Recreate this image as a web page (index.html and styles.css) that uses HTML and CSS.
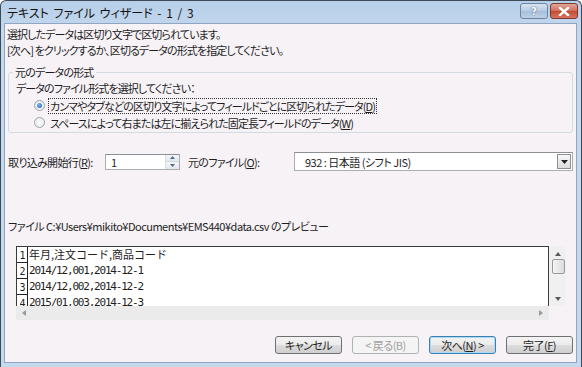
FILE: index.html
```html
<!DOCTYPE html>
<html lang="ja">

<head>
    <meta charset="UTF-8">
    <meta name="viewport" content="width=device-width, initial-scale=1.0">
    <title>テキスト ファイル ウィザード</title>
    <link rel="stylesheet" href="styles.css">
</head>

<body>
    <div class="window">
        <div class="titleBar">
            <span class="titleText">テキスト ファイル ウィザード - 1 / 3</span>
            <div class="captionBtns">
                <button class="capBtn helpBtn">?</button>
                <button class="capBtn closeBtn">
                    <svg width="12" height="9" viewBox="0 0 12 9">
                        <path d="M2 1 L10 8 M10 1 L2 8" stroke="#fff" stroke-width="2.4" stroke-linecap="square" fill="none" />
                    </svg>
                </button>
            </div>
        </div>

        <div class="content">
            <p class="intro">選択したデータは区切り文字で区切られています。</p>
            <p class="intro">[次へ] をクリックするか、区切るデータの形式を指定してください。</p>

            <fieldset class="groupBox">
                <legend class="groupLabel">元のデータの形式</legend>
                <p class="hint">データのファイル形式を選択してください：</p>
                <label class="radioRow">
                    <span class="radioDot checked"></span>
                    <span class="radioText focused">カンマやタブなどの区切り文字によってフィールドごとに区切られたデータ(<u>D</u>)</span>
                </label>
                <label class="radioRow">
                    <span class="radioDot"></span>
                    <span class="radioText">スペースによって右または左に揃えられた固定長フィールドのデータ(<u>W</u>)</span>
                </label>
            </fieldset>

            <div class="optionRow">
                <span class="optLabel startLabel">取り込み開始行(<u>R</u>):</span>
                <div class="spinBox">
                    <span class="spinValue">1</span>
                    <div class="spinArrows">
                        <span class="spinBtn"><svg width="5" height="3" viewBox="0 0 5 3"><path d="M0 3 L2.5 0 L5 3 Z" fill="#4d6a8c" /></svg></span>
                        <span class="spinBtn"><svg width="5" height="3" viewBox="0 0 5 3"><path d="M0 0 L2.5 3 L5 0 Z" fill="#4d6a8c" /></svg></span>
                    </div>
                </div>
                <span class="optLabel fileLabel">元のファイル(<u>O</u>):</span>
                <div class="comboBox">
                    <span class="comboValue">932 : 日本語 (シフト JIS)</span>
                    <span class="comboBtn"><svg width="7" height="4" viewBox="0 0 7 4"><path d="M0 0 L7 0 L3.5 4 Z" fill="#222" /></svg></span>
                </div>
            </div>

            <p class="previewLabel">ファイル C:¥Users¥mikito¥Documents¥EMS440¥data.csv のプレビュー</p>

            <div class="previewArea">
                <div class="previewMain">
                    <div class="grid">
                        <div class="gridRow"><span class="rowNum">1</span><span class="rowData cjk">年月,注文コード,商品コード</span></div>
                        <div class="gridRow"><span class="rowNum">2</span><span class="rowData">2014/12,001,2014-12-1</span></div>
                        <div class="gridRow"><span class="rowNum">3</span><span class="rowData">2014/12,002,2014-12-2</span></div>
                        <div class="gridRow"><span class="rowNum">4</span><span class="rowData">2015/01,003,2014-12-3</span></div>
                    </div>
                    <div class="hScroll">
                        <svg width="4" height="6" viewBox="0 0 4 6"><path d="M4 0 L0 3 L4 6 Z" fill="#9a9a9a" /></svg>
                        <svg width="4" height="6" viewBox="0 0 4 6"><path d="M0 0 L4 3 L0 6 Z" fill="#9a9a9a" /></svg>
                    </div>
                </div>
                <div class="vScroll">
                    <svg width="6" height="4" viewBox="0 0 6 4"><path d="M0 4 L3 0 L6 4 Z" fill="#5a5a5a" /></svg>
                    <span class="vThumb"></span>
                    <svg width="6" height="4" viewBox="0 0 6 4"><path d="M0 0 L3 4 L6 0 Z" fill="#5a5a5a" /></svg>
                </div>
            </div>

            <div class="buttonRow">
                <button class="dlgBtn">キャンセル</button>
                <button class="dlgBtn disabled">&lt; 戻る(B)</button>
                <button class="dlgBtn defaultBtn">次へ(<u>N</u>) &gt;</button>
                <button class="dlgBtn">完了(<u>F</u>)</button>
            </div>
        </div>
    </div>
</body>

</html>
```

FILE: styles.css
```css
* {
    margin: 0;
    padding: 0;
    box-sizing: border-box;
}

body {
    width: 582px;
    height: 367px;
    background-color: #ffffff;
    font-family: "Noto Sans CJK JP", "Noto Sans", sans-serif;
    font-size: 11px;
    color: #1e1e1e;
    font-feature-settings: "palt";
    overflow: hidden;
}

.window {
    width: 582px;
    height: 367px;
    display: flex;
    flex-direction: column;
    background: linear-gradient(#b7cfe9, #c4d8ee 30px, #c4d8ee);
    border: 1px solid #3e4a58;
    border-bottom: none;
    border-radius: 6px 6px 0 0;
}

.titleBar {
    height: 22px;
    display: flex;
    align-items: center;
    justify-content: space-between;
    padding: 0 3px 0 6px;
}

.titleText {
    font-size: 12px;
    color: #111;
    word-spacing: 2px;
}

.captionBtns {
    display: flex;
    gap: 2px;
    margin-top: -2px;
}

.capBtn {
    width: 28px;
    height: 16px;
    border: 1px solid #6d84a0;
    border-radius: 3px;
    display: flex;
    align-items: center;
    justify-content: center;
    font-family: "DejaVu Sans", sans-serif;
    font-size: 11px;
    font-weight: bold;
    line-height: 1;
}

.helpBtn {
    background: linear-gradient(#d7e4f2, #b5cbe3 50%, #a6bfdb 51%, #bcd1e8);
    color: #ffffff;
    text-shadow: 0 0 1px #4a5a70, 0 0 1px #4a5a70;
}

.closeBtn {
    border-color: #7a3a30;
    background: linear-gradient(#e4a69a, #d26e5c 50%, #c24a34 51%, #d9745f);
}

.content {
    flex: 1;
    margin: 0 4px 4px 3px;
    background-color: #f6f2f6;
    border: 1px solid #8ea6c2;
    padding-top: 2px;
    display: flex;
    flex-direction: column;
}

.intro {
    line-height: 16px;
    padding-left: 2px;
    letter-spacing: -0.9px;
}

.groupBox {
    margin: 6px 3px 0 3px;
    border: 1px solid #d3dbe2;
    border-radius: 3px;
    padding: 0 0 1px 0;
}

.groupLabel {
    margin-left: 4px;
    padding: 0 2px;
    line-height: 16px;
    letter-spacing: -0.8px;
}

.hint {
    line-height: 17px;
    padding-left: 7px;
    letter-spacing: -0.9px;
}

.radioRow {
    display: flex;
    align-items: center;
    height: 17px;
    padding-left: 25px;
    letter-spacing: -0.9px;
}

.radioDot {
    width: 11px;
    height: 11px;
    border-radius: 50%;
    border: 1px solid #9aa3ab;
    background: radial-gradient(#ffffff, #e2e5e8);
    margin-right: 3px;
    position: relative;
}

.radioDot.checked::after {
    content: "";
    position: absolute;
    left: 2px;
    top: 2px;
    width: 5px;
    height: 5px;
    border-radius: 50%;
    background: radial-gradient(circle at 40% 35%, #7ab8f0, #1c5fb0);
}

.radioText {
    padding: 0 1px;
    line-height: 14px;
    border: 1px dotted transparent;
}

.radioText.focused {
    border-color: #333;
}

.optionRow {
    display: flex;
    align-items: center;
    margin-top: 19px;
    height: 19px;
}

.optLabel {
    letter-spacing: -0.7px;
}

.startLabel {
    margin-left: 3px;
    width: 97px;
}

.spinBox {
    width: 75px;
    height: 16px;
    background-color: #ffffff;
    border: 1px solid #abadb3;
    border-top-color: #8c8f94;
    display: flex;
    justify-content: space-between;
}

.spinValue {
    padding-left: 5px;
    line-height: 14px;
    font-size: 11px;
}

.spinArrows {
    width: 14px;
    display: flex;
    flex-direction: column;
    border-left: 1px solid #dadde2;
}

.spinBtn {
    flex: 1;
    display: flex;
    align-items: center;
    justify-content: center;
    background: linear-gradient(#f5f6f8, #e3e7ec);
}

.spinBtn + .spinBtn {
    border-top: 1px solid #d3d8de;
}

.fileLabel {
    margin-left: 8px;
}

.comboBox {
    margin-left: auto;
    margin-right: 3px;
    width: 279px;
    height: 19px;
    background-color: #ffffff;
    border: 1px solid #abadb3;
    border-top-color: #8c8f94;
    display: flex;
    align-items: center;
    justify-content: space-between;
}

.comboValue {
    padding-left: 10px;
    font-size: 11px;
    letter-spacing: -0.5px;
}

.comboBtn {
    width: 14px;
    height: 15px;
    margin-right: 1px;
    border: 1px solid #8f8f8f;
    background: linear-gradient(#f8f8f8, #dcdcdc);
    display: flex;
    align-items: center;
    justify-content: center;
}

.previewLabel {
    margin-top: 47px;
    padding-left: 3px;
    line-height: 16px;
    font-size: 11px;
    letter-spacing: -0.5px;
}

.previewArea {
    margin: 12px 0 0 11px;
    display: flex;
    align-items: flex-start;
}

.previewMain {
    width: 533px;
}

.grid {
    height: 60px;
    overflow: hidden;
    background-color: #ffffff;
    border: 1px solid #3a3a3a;
    border-bottom: none;
}

.gridRow {
    display: flex;
    height: 16px;
    align-items: stretch;
}

.rowNum {
    width: 11px;
    border-right: 1px solid #222;
    border-bottom: 1px solid #222;
    font-family: "DejaVu Sans Mono", monospace;
    font-size: 10px;
    line-height: 18px;
    text-align: center;
    letter-spacing: -1px;
}

.rowData {
    padding-left: 1px;
    font-family: "DejaVu Sans Mono", monospace;
    font-size: 11px;
    line-height: 15px;
    letter-spacing: -1.2px;
}

.rowData.cjk {
    font-family: "Noto Sans CJK JP", sans-serif;
    font-feature-settings: normal;
    letter-spacing: 0;
}

.hScroll {
    height: 14px;
    background-color: #ebebeb;
    display: flex;
    align-items: center;
    justify-content: space-between;
    padding: 0 6px;
}

.vScroll {
    width: 16px;
    height: 60px;
    margin-left: 1px;
    background-color: #f0f0f0;
    display: flex;
    flex-direction: column;
    align-items: center;
    padding: 6px 0 5px;
}

.vThumb {
    width: 13px;
    height: 15px;
    margin: 3px 0 auto;
    border: 1px solid #9a9a9a;
    border-radius: 2px;
    background: linear-gradient(90deg, #f4f4f4, #dcdcdc);
}

.buttonRow {
    margin-top: auto;
    margin-bottom: 8px;
    display: flex;
    justify-content: flex-end;
    gap: 10px;
    padding-right: 3px;
}

.dlgBtn {
    width: 67px;
    height: 18px;
    border: 1px solid #707070;
    border-radius: 3px;
    background: linear-gradient(#f3f3f3, #ebebeb 50%, #dddddd 51%, #cfcfcf);
    font-family: "Noto Sans CJK JP", sans-serif;
    font-feature-settings: "palt";
    font-size: 11px;
    line-height: 15px;
    color: #1e1e1e;
    letter-spacing: -0.5px;
}

.dlgBtn.disabled {
    border-color: #adb2b5;
    background: #f4f4f4;
    color: #a0a0a0;
}

.dlgBtn.defaultBtn {
    border-color: #3c7fb1;
    box-shadow: inset 0 0 0 1px #a8dcf6;
}
```
